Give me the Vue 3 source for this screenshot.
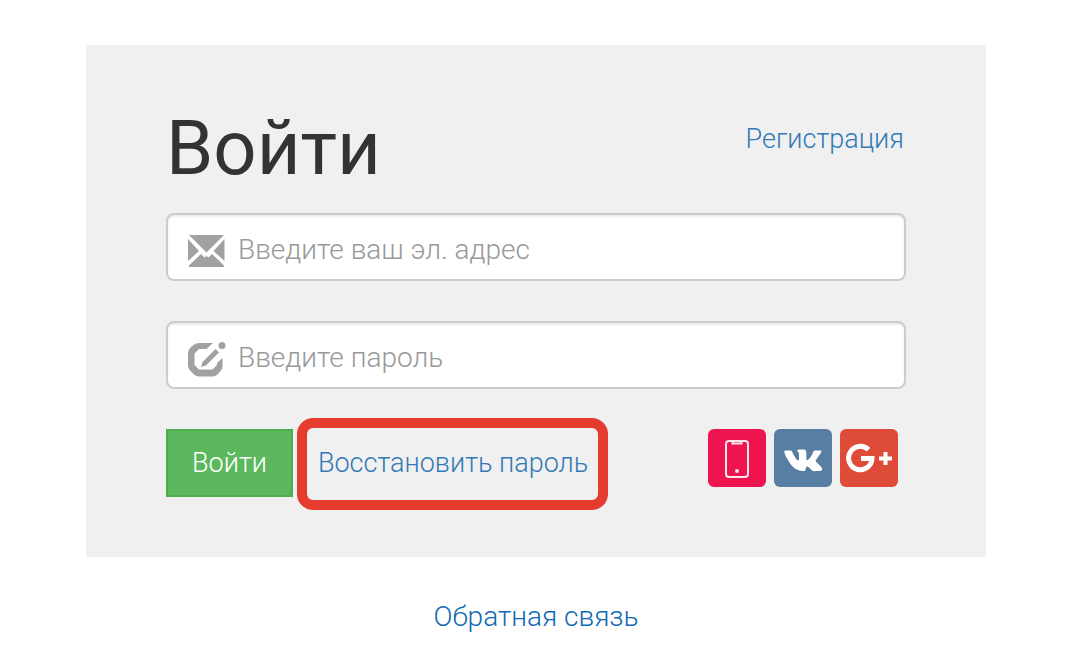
<script setup>
import { ref } from 'vue'

const email = ref('')
const password = ref('')
</script>

<template>
  <div class="page">
    <main class="panel">
      <header class="head">
        <h1 class="title">Войти</h1>
        <a class="link" href="#register">Регистрация</a>
      </header>

      <form @submit.prevent>
        <label class="field">
          <svg class="field-icon" viewBox="0 0 38 36" aria-hidden="true">
            <path d="M1 2H36L18.500 19.500Z" />
            <path d="M0 6L11 18L0 28Z" />
            <path d="M36.500 6L25.500 18L36.500 28Z" />
            <path d="M1 34V32.500L13 21L16.500 24.500L18.500 23L20.500 24.500L24 21L36 32.500V34Z" />
          </svg>
          <input v-model="email" class="input" type="email" placeholder="Введите ваш эл. адрес" aria-label="Введите ваш эл. адрес" />
        </label>

        <label class="field">
          <svg class="field-icon" viewBox="0 0 38 36" aria-hidden="true">
            <path d="M25 2L18.500 8H11L6.500 12.500V24L11 28.500H24.500L29 24V22L34.500 17V25Q34.500 28 32.500 30L29.500 33.500Q27.500 35.500 24.500 35.500H11Q8 35.500 6 33.500L3 30.500Q0 27.500 0 24.500V12Q0 9 3 6L5.500 4Q8 2 11 2Z" />
            <path d="M27.500 8L31 11.500L18 24.500L13 26L14.500 21Z" />
            <circle cx="34" cy="4.500" r="3.500" />
          </svg>
          <input v-model="password" class="input" type="password" placeholder="Введите пароль" aria-label="Введите пароль" />
        </label>

        <div class="actions">
          <button class="submit" type="submit">Войти</button>
          <a class="link restore" href="#restore">Восстановить пароль</a>
          <nav class="social">
            <a class="tile phone" href="#phone" aria-label="Телефон">
              <svg viewBox="0 0 58 58" aria-hidden="true">
                <rect x="18" y="12" width="22" height="36" rx="3" fill="none" stroke="#fbe6ec" stroke-width="2" />
                <path d="M24.500 12V14.500H33.500V12" fill="none" stroke="#fbe6ec" stroke-width="2" />
                <circle cx="29" cy="42" r="2" fill="#fbe6ec" />
              </svg>
            </a>
            <a class="tile vk" href="#vk" aria-label="ВКонтакте">
              <svg viewBox="0 0 58 58" aria-hidden="true">
                <path fill="#fff" d="M28 42H30.500Q31.700 41.700 31.700 40Q31.800 37 33.500 37.500C35 38 37 41 39 42Q40 42.300 42 42H46Q49.500 41.500 47.500 38.500C46.500 36.500 43 34 41.800 32.500Q41.300 31.800 42 30.800C43 29.500 47 24 47.500 22.200Q47.700 21.500 46.500 21.500H41Q40 21.500 39.500 22.500C38.500 25 36.500 28.500 34.500 30.400C32.800 32 32.300 31 32.300 29V23Q32.300 20.500 30 20.500H25Q23.500 20.500 23 22C23.300 22.700 25 22.500 25 25.500V30Q24.800 32 23.700 31.500C21.500 29.500 19.500 26 18 22.500Q17.500 21.500 16.500 21.500H11.500Q10 21.500 10.200 23C11.500 27.500 15.500 34 18.500 37.300C21 40 24.500 42 28 42Z" />
              </svg>
            </a>
            <a class="tile google" href="#google" aria-label="Google Plus">
              <svg viewBox="0 0 58 58" aria-hidden="true">
                <path d="M28.500 20.700A11.700 11.700 0 1 0 32 29.500H21" fill="none" stroke="#fff" stroke-width="5" />
                <path d="M39 29.500H52M45.500 23V36" fill="none" stroke="#fff" stroke-width="4" />
              </svg>
            </a>
          </nav>
        </div>
      </form>
    </main>
    <footer class="foot">
      <a class="feedback" href="#feedback">Обратная связь</a>
    </footer>
  </div>
</template>

<style>
body {
  background: #fff;
}
</style>

<style scoped>
.page {
  padding: 45px 81px 24px 86px;
  font-family: Roboto, "Open Sans", "Liberation Sans", sans-serif;
  font-size: 28px;
  font-weight: 300;
  line-height: 40px;
}

.panel {
  padding: 60px 80px;
  background: #f0f0f0;
}

.head {
  display: flex;
  justify-content: space-between;
  align-items: flex-start;
  height: 108px;
}

.title {
  margin: 0;
  color: #333;
  font-size: 76px;
  font-weight: 400;
  line-height: 86px;
}

.link {
  color: #337ab7;
  font-size: 27px;
  text-decoration: none;
}

.head .link {
  margin: 14px 2px 0 0;
}

.field {
  display: flex;
  align-items: center;
  box-sizing: border-box;
  height: 68px;
  margin-bottom: 40px;
  padding: 0 20px;
  border: 2px solid #ccc;
  border-radius: 8px;
  background: #fff;
  box-shadow: inset 0 2px 2px rgba(0, 0, 0, 0.075);
  cursor: text;
}

.field-icon {
  flex: none;
  width: 38px;
  height: 36px;
  margin-top: 8px;
  fill: #a1a1a1;
}

.input {
  flex: 1;
  min-width: 0;
  height: 48px;
  margin: 4px 0 0;
  padding: 0 0 0 12px;
  border: 0;
  outline: 0;
  background: transparent;
  color: #555;
  font: inherit;
}

.input::placeholder {
  color: #999;
  opacity: 1;
}

.actions {
  display: flex;
  align-items: flex-start;
}

.submit {
  height: 68px;
  padding: 0 24px;
  border: 2px solid #4cae4c;
  background: #5cb85c;
  color: #fff;
  font: inherit;
  font-size: 27px;
}

.restore {
  position: relative;
  margin: 14px 0 0 25px;
}

.restore::after {
  content: "";
  position: absolute;
  inset: -25px -20px -27px -21px;
  border: 10px solid #e63c30;
  border-radius: 16px;
  pointer-events: none;
}

.social {
  display: flex;
  gap: 8px;
  margin-left: auto;
  padding-right: 8px;
}

.tile {
  width: 58px;
  height: 58px;
  border-radius: 6px;
}

.tile svg {
  display: block;
}

.phone {
  background: #ed144f;
}

.vk {
  background: #587ea3;
}

.google {
  background: #de4b39;
}

.foot {
  padding-top: 40px;
  text-align: center;
}

.feedback {
  color: #0f69b4;
  text-decoration: none;
}
</style>
